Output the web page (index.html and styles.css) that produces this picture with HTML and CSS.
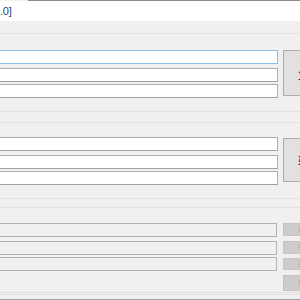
FILE: index.html
```html
<!DOCTYPE html>
<html>
<head>
  <meta charset="utf-8">
  <title>Tool</title>
  <link rel="stylesheet" href="styles.css">
</head>
<body>
  <div class="window">
    <div class="edge"></div>
    <div class="header">
      <span class="title">[v1.0]</span>
    </div>

    <div class="section first">
      <div class="section-bar"></div>
      <div class="section-body">
        <div class="fields">
          <input type="text" class="field focused">
          <input type="text" class="field">
          <input type="text" class="field last">
        </div>
        <button type="button" class="button big">生成</button>
      </div>
    </div>

    <div class="section second">
      <div class="section-bar"></div>
      <div class="section-body">
        <div class="fields">
          <input type="text" class="field">
          <input type="text" class="field">
          <input type="text" class="field last">
        </div>
        <button type="button" class="button big short">转换</button>
      </div>
    </div>

    <div class="section third">
      <div class="section-bar"></div>
      <div class="section-body">
        <div class="list">
          <div class="list-row">
            <input type="text" class="field" disabled>
            <button type="button" class="button small" disabled>≡</button>
          </div>
          <div class="list-row">
            <input type="text" class="field" disabled>
            <button type="button" class="button small" disabled>≡</button>
          </div>
          <div class="list-row">
            <input type="text" class="field" disabled>
            <button type="button" class="button small" disabled>≡</button>
          </div>
          <div class="list-row">
            <div class="spacer"></div>
            <button type="button" class="button medium" disabled>≡</button>
          </div>
        </div>
      </div>
    </div>

    <div class="footer"></div>
  </div>
</body>
</html>
```

FILE: styles.css
```css
html, body {
  margin: 0;
  padding: 0;
  overflow: hidden;
}

body {
  width: 300px;
  height: 300px;
  background: #f0f0f0;
  font-family: "Liberation Sans", "Noto Sans CJK SC", sans-serif;
  font-size: 12px;
}

.window {
  width: 300px;
  height: 300px;
  display: flex;
  flex-direction: column;
  overflow: hidden;
}

.edge {
  height: 1px;
  margin-left: 28px;
  background: #8c8c8c;
  flex-shrink: 0;
}

.header {
  height: 20px;
  background: white;
  display: flex;
  align-items: center;
  flex-shrink: 0;
}

.title {
  margin-left: -15px;
  white-space: nowrap;
  font-size: 11px;
  color: #23467e;
}

.section {
  border-bottom: 1px solid #e2e2e2;
  flex-shrink: 0;
}

.section-bar {
  border-bottom: 1px solid #e2e2e2;
}

.first .section-bar {
  height: 12px;
}

.second .section-bar {
  height: 10px;
}

.third .section-bar {
  height: 8px;
}

.section-body {
  display: flex;
  align-items: flex-start;
  gap: 5px;
  margin-left: -10px;
  margin-right: -23px;
}

.first .section-body {
  padding: 16px 0 13px;
}

.second .section-body {
  padding: 14px 0 13px;
}

.third .section-body {
  padding: 15px 0 1px;
}

.fields {
  flex: 1;
  display: flex;
  flex-direction: column;
}

.field {
  display: block;
  height: 14px;
  margin: 0 0 4px;
  padding: 0;
  border: 1px solid #adadad;
  border-bottom-color: #a0a0a0;
  background: white;
  box-sizing: border-box;
  width: 100%;
  font-family: inherit;
}

.fields .field:nth-child(2) {
  margin-bottom: 2px;
}

.field.last {
  margin-bottom: 0;
}

.field.focused {
  border-color: #8dbde9;
  outline: none;
}

.field:disabled {
  background: #f0f0f0;
  border-color: #b0b0b0;
}

.button {
  width: 40px;
  flex-shrink: 0;
  margin: 0;
  padding: 0 0 0 14px;
  text-align: left;
  white-space: nowrap;
  overflow: hidden;
  font-family: inherit;
  font-size: 12px;
  color: #222;
  background: #e1e1e1;
  border: 1px solid #adadad;
  box-sizing: border-box;
}

.big {
  height: 46px;
}

.big.short {
  height: 44px;
  margin-top: 1px;
}

.button:disabled {
  background: #cccccc;
  border-color: #c4c4c4;
  color: #a3a3a3;
}

.list {
  flex: 1;
  display: flex;
  flex-direction: column;
}

.list-row {
  display: flex;
  gap: 6px;
  align-items: flex-start;
  margin-bottom: 4px;
}

.list-row:nth-child(2) {
  margin-bottom: 2px;
}

.list-row:last-child {
  margin-bottom: 0;
}

.list-row .field {
  flex: 1;
  width: auto;
  margin: 0;
}

.list-row .spacer {
  flex: 1;
}

.small {
  height: 13px;
  line-height: 11px;
}

.list-row:nth-child(3) .small {
  height: 12px;
  margin-top: 1px;
}

.medium {
  height: 16px;
  line-height: 14px;
}

.footer {
  flex: 1;
  border-top: 1px solid #e2e2e2;
  border-bottom: 1px solid #a0a0a0;
  margin-top: 1px;
}
```
